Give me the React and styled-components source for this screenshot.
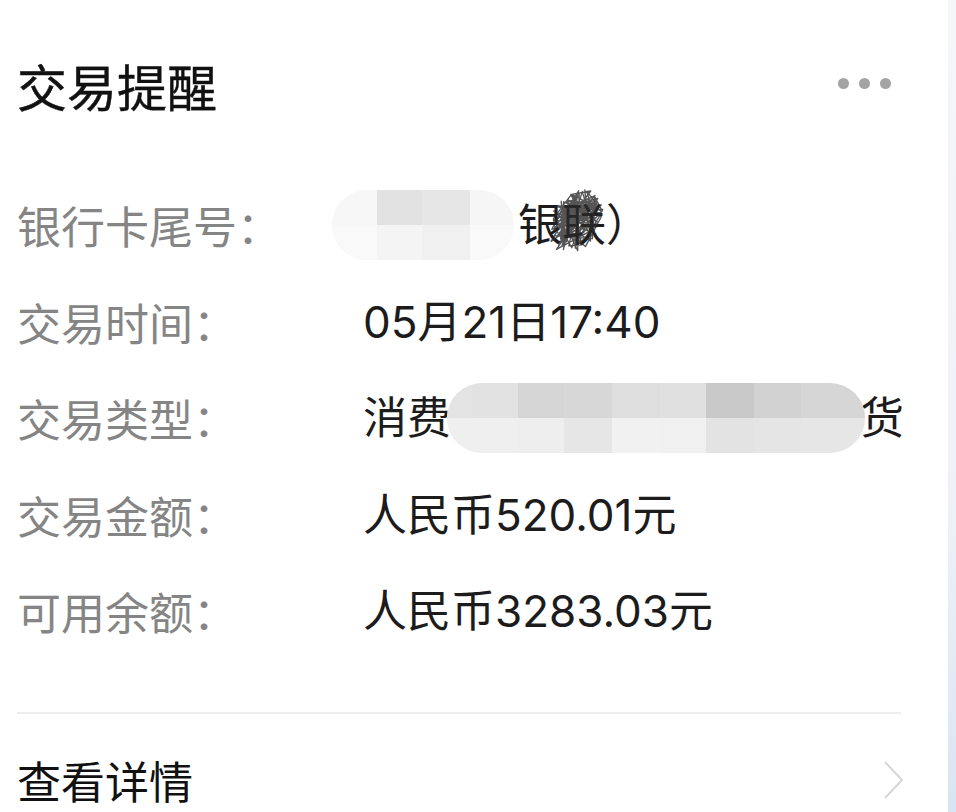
import React from 'react';
import styled, { createGlobalStyle } from 'styled-components';

const GlobalStyle = createGlobalStyle`
  html, body {
    margin: 0;
    padding: 0;
  }
  body {
    width: 956px;
    height: 812px;
    overflow: hidden;
    background: linear-gradient(to bottom, #f4f6fa 0%, #eef2f8 62%, #d9e5f2 100%);
    font-family: "Noto Sans CJK SC", "Noto Sans", sans-serif;
  }
`;

const rows = [
  { label: '银行卡尾号：', kind: 'card' },
  { label: '交易时间：', value: '05月21日17:40' },
  { label: '交易类型：', kind: 'type' },
  { label: '交易金额：', value: '人民币520.01元' },
  { label: '可用余额：', value: '人民币3283.03元' },
];

// mosaic tiles of the blurred parts (top row / bottom row)
const cardTiles = {
  top: ['#f7f7f7', '#e2e2e2', '#e6e6e6', '#f6f6f6'],
  bottom: ['#f9f9f9', '#f4f4f4', '#f0f0f0', '#f9f9f9'],
  widths: [45, 45, 48, 43],
};

const typeTiles = {
  top: ['#e4e4e4', '#e2e2e2', '#d5d5d5', '#d7d7d7', '#dedede', '#e0e0e0', '#c9c9c9', '#d2d2d2', '#d6d6d6'],
  bottom: ['#efefef', '#efefef', '#eeeeee', '#e6e6e6', '#f1f1f1', '#f0f0f0', '#e3e3e3', '#e5e5e5', '#e6e6e6'],
  widths: [25, 46, 46, 48, 48, 46, 48, 47, 64],
};

// scribble made of seeded random points inside a blob
let seed = 7;
const rand = () => {
  seed = (seed * 16807) % 2147483647;
  return seed / 2147483647;
};
const scribblePoints = [];
for (let i = 0; i < 140; i++) {
  const a = rand() * Math.PI * 2;
  const r = Math.sqrt(rand());
  const x = 31 + Math.cos(a) * r * 28;
  const y = 35 + Math.sin(a) * r * 31 - (x - 31) * 0.35;
  scribblePoints.push(`${x.toFixed(1)},${y.toFixed(1)}`);
}

const Mosaic = ({ tiles, width, height, offset }) => (
  <Pill $w={width} $h={height} style={{ marginLeft: offset }}>
    <TileRow>
      {tiles.top.map((c, i) => (
        <Tile key={i} $bg={c} $w={tiles.widths[i]} />
      ))}
    </TileRow>
    <TileRow>
      {tiles.bottom.map((c, i) => (
        <Tile key={i} $bg={c} $w={tiles.widths[i]} />
      ))}
    </TileRow>
  </Pill>
);

const Scribble = () => (
  <ScribbleSvg viewBox="0 0 62 70" width="62" height="70">
    <polyline
      points={scribblePoints.join(' ')}
      fill="none"
      stroke="#2b2b2b"
      strokeWidth="1.3"
      strokeLinejoin="round"
      opacity="0.8"
    />
  </ScribbleSvg>
);

const App = () => {
  return (
    <>
      <GlobalStyle />
      <Card>
        <Header>
          <Title>交易提醒</Title>
          <MoreDots>
            <Dot />
            <Dot />
            <Dot />
          </MoreDots>
        </Header>

        <List>
          {rows.map((r) => (
            <Row key={r.label}>
              <Label>{r.label}</Label>
              <Value>
                {r.kind === 'card' && (
                  <>
                    <Mosaic tiles={cardTiles} width={182} height={70} offset={-31} />
                    <Masked>
                      银联
                      <Scribble />
                    </Masked>
                    <span>）</span>
                  </>
                )}
                {r.kind === 'type' && (
                  <>
                    <span>消费</span>
                    <Mosaic tiles={typeTiles} width={418} height={70} offset={-4} />
                    <span style={{ marginLeft: -5 }}>货</span>
                  </>
                )}
                {!r.kind && r.value}
              </Value>
            </Row>
          ))}
        </List>

        <Divider />

        <Footer>
          <FooterText>查看详情</FooterText>
          <svg width="22" height="40" viewBox="0 0 22 40">
            <polyline points="2,2 19,20 2,38" fill="none" stroke="#d6d6d6" strokeWidth="2" />
          </svg>
        </Footer>
      </Card>
    </>
  );
};

const Card = styled.div`
  width: 948px;
  height: 812px;
  box-sizing: border-box;
  background: #ffffff;
  padding: 0 43px 0 17px;
  display: flex;
  flex-direction: column;
  overflow: hidden;
`;

const Header = styled.div`
  height: 170px;
  display: flex;
  align-items: center;
  justify-content: space-between;
  flex-shrink: 0;
`;

const Title = styled.h1`
  margin: 0;
  font-size: 50px;
  line-height: 1;
  font-weight: 400;
  color: #111111;
  -webkit-text-stroke: 0.4px #111111;
`;

const MoreDots = styled.div`
  display: flex;
  gap: 10px;
  margin-right: 14px;
  margin-top: -4px;
`;

const Dot = styled.span`
  width: 11px;
  height: 11px;
  border-radius: 50%;
  background: #a3a3a3;
`;

const List = styled.div`
  display: flex;
  flex-direction: column;
  margin-top: 7px;
  flex-shrink: 0;
`;

const Row = styled.div`
  height: 96.5px;
  display: flex;
  align-items: center;
  font-size: 44px;
  line-height: 1;
`;

const Label = styled.div`
  width: 346px;
  flex-shrink: 0;
  color: #858585;
  white-space: nowrap;
`;

const Value = styled.div`
  display: flex;
  align-items: center;
  color: #1c1c1c;
  white-space: nowrap;
  font-family: Inter, "Noto Sans CJK SC", sans-serif;
`;

const Pill = styled.div`
  width: ${(p) => p.$w}px;
  height: ${(p) => p.$h}px;
  border-radius: ${(p) => p.$h / 2}px;
  background: #f8f8f8;
  display: flex;
  flex-direction: column;
  overflow: hidden;
  flex-shrink: 0;
  filter: blur(0.6px);
`;

const TileRow = styled.div`
  flex: 1;
  display: flex;
`;

const Tile = styled.div`
  width: ${(p) => p.$w}px;
  flex-shrink: 0;
  background: ${(p) => p.$bg};
`;

const Masked = styled.span`
  position: relative;
  margin-left: 4px;
`;

const ScribbleSvg = styled.svg`
  position: absolute;
  left: 26px;
  top: -16px;
`;

const Divider = styled.div`
  height: 2px;
  background: #eeeeee;
  margin-top: 52px;
  margin-right: 4px;
  flex-shrink: 0;
`;

const Footer = styled.div`
  height: 132px;
  display: flex;
  align-items: center;
  justify-content: space-between;
  flex-shrink: 0;
`;

const FooterText = styled.span`
  font-size: 44px;
  line-height: 1;
  color: #111111;
`;

export default App;
